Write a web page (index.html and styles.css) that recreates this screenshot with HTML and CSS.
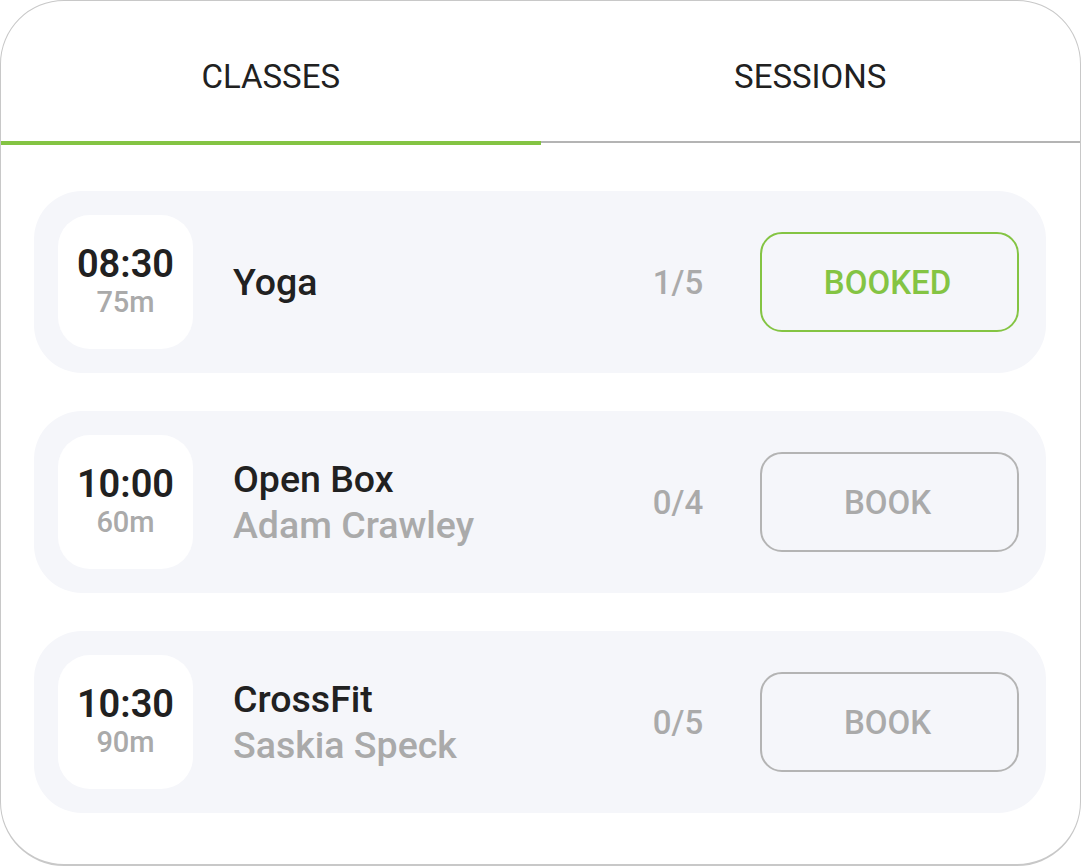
FILE: index.html
```html
<!DOCTYPE html>
<html lang="en">
  <head>
    <meta charset="UTF-8" />
    <meta name="viewport" content="width=device-width, initial-scale=1.0" />
    <title>Classes</title>
    <link rel="stylesheet" href="styles.css">
  </head>
  <body>
    <div class="card">
      <div class="tabs">
        <div class="tab active">CLASSES</div>
        <div class="tab">SESSIONS</div>
      </div>
      <div class="list">
        <div class="row">
          <div class="time">
            <span class="clock">08:30</span>
            <span class="length">75m</span>
          </div>
          <div class="info">
            <div class="name">Yoga</div>
          </div>
          <div class="count">1/5</div>
          <button class="btn booked">BOOKED</button>
        </div>
        <div class="row">
          <div class="time">
            <span class="clock">10:00</span>
            <span class="length">60m</span>
          </div>
          <div class="info">
            <div class="name">Open Box</div>
            <div class="coach">Adam Crawley</div>
          </div>
          <div class="count">0/4</div>
          <button class="btn">BOOK</button>
        </div>
        <div class="row">
          <div class="time">
            <span class="clock">10:30</span>
            <span class="length">90m</span>
          </div>
          <div class="info">
            <div class="name">CrossFit</div>
            <div class="coach">Saskia Speck</div>
          </div>
          <div class="count">0/5</div>
          <button class="btn">BOOK</button>
        </div>
      </div>
    </div>
  </body>
</html>
```

FILE: styles.css
```css
body {
  margin: 0;
  background: #ffffff;
  font-family: Roboto, "Liberation Sans", sans-serif;
  color: #212121;
}
.card {
  width: 1081px;
  height: 866px;
  box-sizing: border-box;
  border: 1px solid #c8c8c8;
  border-bottom-width: 2px;
  border-radius: 64px;
  overflow: hidden;
  background: #ffffff;
}
.tabs {
  display: flex;
  align-items: flex-start;
}
.tab {
  flex: 1;
  text-align: center;
  font-size: 33px;
  font-weight: 400;
  height: 140px;
  line-height: 152px;
  border-bottom: 2px solid #b4b4b4;
}
.tab.active {
  border-bottom: 4px solid #84c443;
}
.list {
  display: flex;
  flex-direction: column;
  gap: 38px;
  padding: 46px 34px 0 33px;
}
.row {
  display: flex;
  align-items: center;
  height: 182px;
  box-sizing: border-box;
  padding: 24px 27px 24px 24px;
  border-radius: 48px;
  background: #f5f6fa;
}
.time {
  width: 135px;
  height: 134px;
  border-radius: 32px;
  background: #ffffff;
  display: flex;
  flex-direction: column;
  align-items: center;
  justify-content: center;
}
.clock {
  font-size: 38px;
  font-weight: 600;
  line-height: 40px;
}
.length {
  font-size: 29px;
  font-weight: 500;
  color: #aaaaaa;
  line-height: 36px;
}
.info {
  flex: 1;
  margin-left: 40px;
}
.name {
  font-size: 37.5px;
  font-weight: 500;
  line-height: 46px;
}
.coach {
  font-size: 37.5px;
  font-weight: 500;
  color: #aaaaaa;
  line-height: 46px;
}
.count {
  width: 100px;
  text-align: center;
  font-size: 33px;
  font-weight: 500;
  color: #aaaaaa;
  margin-right: 32px;
}
.btn {
  width: 259px;
  height: 100px;
  border: 2px solid #b4b4b4;
  border-radius: 22px;
  background: transparent;
  font-family: Roboto, "Liberation Sans", sans-serif;
  font-size: 33px;
  font-weight: 500;
  color: #aaaaaa;
  padding: 0 4px 0 0;
}
.btn.booked {
  border-color: #84c443;
  color: #84c443;
}
```
